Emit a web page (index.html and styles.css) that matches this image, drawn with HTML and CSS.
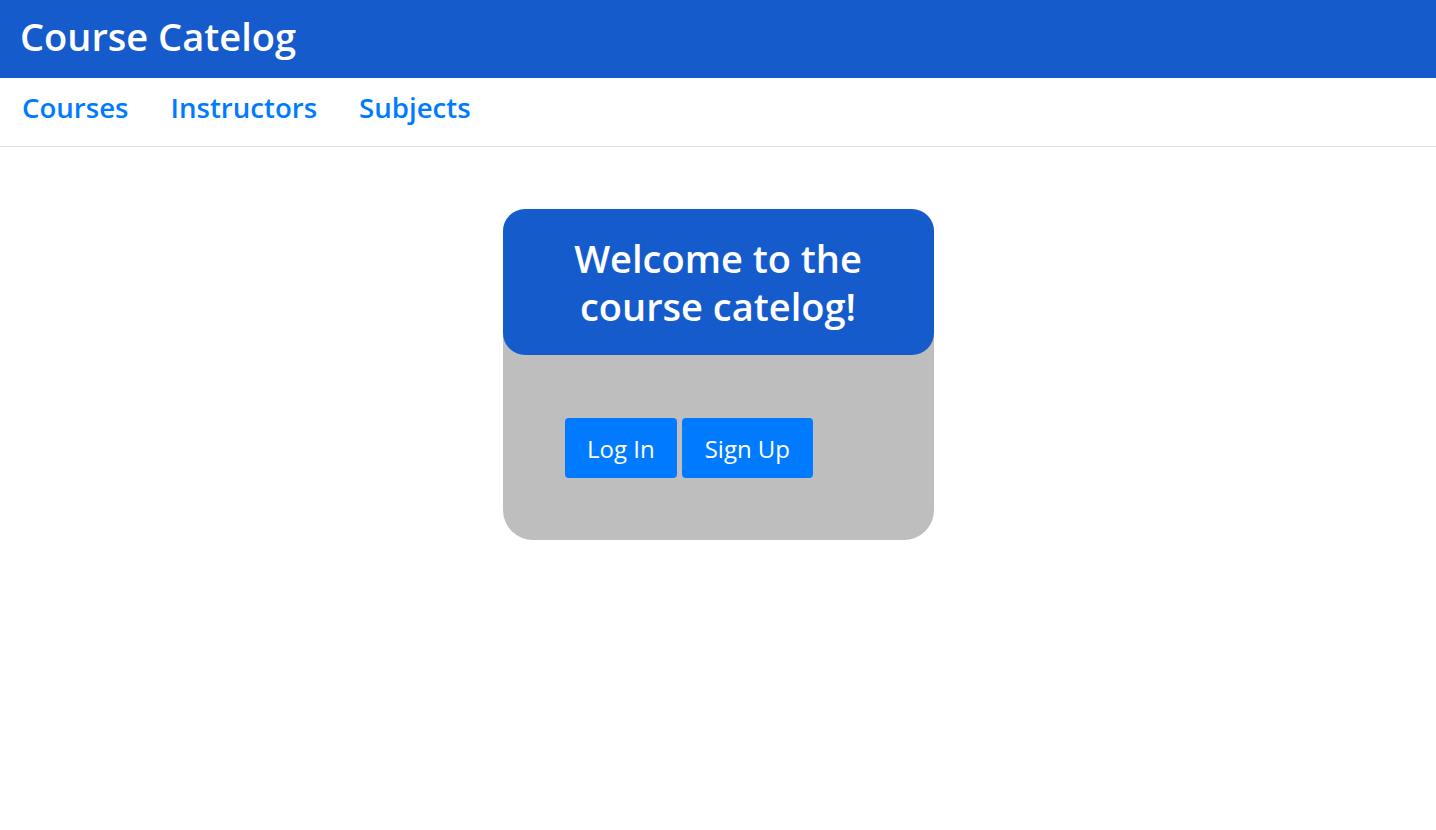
FILE: index.html
```html
<!DOCTYPE html>
<html lang="en">
<head>
<meta charset="utf-8">
<title>Course Catelog</title>
<link rel="stylesheet" href="styles.css">
</head>
<body>
<header class="topbar">
  <h1 class="brand">Course Catelog</h1>
</header>
<nav class="mainnav">
  <a class="navlink" href="#">Courses</a>
  <a class="navlink" href="#">Instructors</a>
  <a class="navlink" href="#">Subjects</a>
</nav>
<main class="content">
  <section class="card">
    <div class="card-head">
      <h2 class="card-title">Welcome to the course catelog!</h2>
    </div>
    <div class="card-body">
      <button class="btn" type="button">Log In</button>
      <button class="btn" type="button">Sign Up</button>
    </div>
  </section>
</main>
</body>
</html>
```
FILE: styles.css
```css
* { box-sizing: border-box; }
html, body { margin: 0; padding: 0; }
body {
  font-family: "Open Sans", "Noto Sans", sans-serif;
  background: #ffffff;
  color: #212529;
}
.topbar {
  background: #155bcc;
  height: 78px;
  display: flex;
  align-items: center;
  padding: 0 0 6px 20px;
}
.brand {
  margin: 0;
  color: #ffffff;
  font-size: 38px;
  font-weight: 600;
  line-height: 1;
}
.mainnav {
  display: flex;
  align-items: center;
  gap: 42px;
  height: 69px;
  padding: 0 0 9px 22px;
  border-bottom: 1px solid #dee2e6;
}
.navlink {
  color: #007bff;
  text-decoration: none;
  font-size: 27.6px;
  font-weight: 600;
  line-height: 1;
}
.content {
  display: flex;
  justify-content: center;
  padding-top: 62px;
}
.card {
  width: 431px;
  background: #bebebe;
  border-radius: 30px;
}
.card-head {
  background: #155bcc;
  border-radius: 22px;
  padding: 25px 60px;
}
.card-title {
  margin: 0;
  color: #ffffff;
  text-align: center;
  font-size: 38px;
  font-weight: 600;
  line-height: 48px;
}
.card-body {
  display: flex;
  gap: 5px;
  padding: 63px 62px 62px;
}
.btn {
  height: 60px;
  padding: 0 22.5px;
  border: none;
  border-radius: 4px;
  background: #007bff;
  color: #ffffff;
  font-family: inherit;
  font-size: 24px;
  font-weight: 400;
}
```
